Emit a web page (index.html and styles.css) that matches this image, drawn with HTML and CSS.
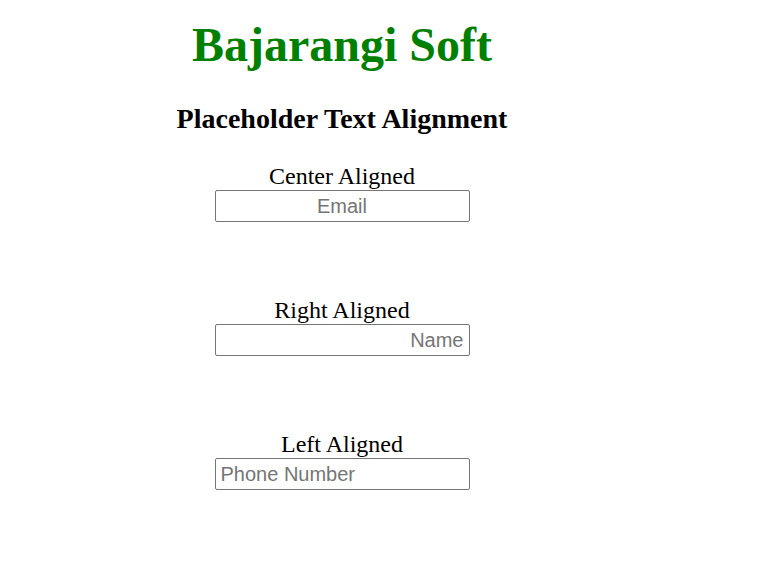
FILE: index.html
```html
<!DOCTYPE html>
<html lang="en">
<head>
    <meta charset="UTF-8">
    <title>Placeholder Text Alignment</title>
    <link rel="stylesheet" href="styles.css">
</head>
<body>
    <div class="page">
        <h1 class="title">Bajarangi Soft</h1>
        <h2 class="subtitle">Placeholder Text Alignment</h2>
        <div class="field">
            <label for="email">Center Aligned</label>
            <input id="email" class="center" type="text" placeholder="Email">
        </div>
        <div class="field">
            <label for="name">Right Aligned</label>
            <input id="name" class="right" type="text" placeholder="Name">
        </div>
        <div class="field">
            <label for="phone">Left Aligned</label>
            <input id="phone" class="left" type="text" placeholder="Phone Number">
        </div>
    </div>
</body>
</html>
```

FILE: styles.css
```css
body {
    margin: 0;
    padding: 0;
    background: #fff;
    font-family: "Liberation Serif", "Times New Roman", serif;
}
.page {
    width: 684px;
    display: flex;
    flex-direction: column;
    align-items: center;
    text-align: center;
    padding-top: 17px;
}
.title {
    margin: 0;
    font-size: 48px;
    font-weight: bold;
    color: green;
    line-height: 55px;
}
.subtitle {
    margin: 31px 0 0;
    font-size: 28px;
    font-weight: bold;
    line-height: 32px;
}
.field {
    display: flex;
    flex-direction: column;
    align-items: center;
    margin-top: 27px;
}
.field + .field {
    margin-top: 74px;
}
label {
    font-size: 24px;
    line-height: 28px;
}
input {
    box-sizing: border-box;
    width: 255px;
    height: 32px;
    padding: 0 5px;
    border: 1px solid #767676;
    border-radius: 2px;
    font-family: "Liberation Sans", Arial, sans-serif;
    font-size: 20px;
    color: #000;
    outline: none;
}
input::placeholder { color: #757575; }
.center { text-align: center; }
.right { text-align: right; }
.left { text-align: left; }
```
